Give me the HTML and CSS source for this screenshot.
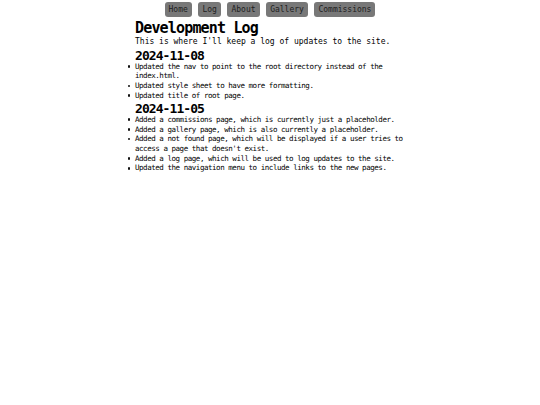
FILE: index.html
```
<!DOCTYPE html>
<html>
<head>
<meta charset="utf-8">
<title>Development Log</title>
<link rel="stylesheet" href="styles.css">
</head>
<body>
<nav class="nav">
  <a class="nav-btn" href="#">Home</a>
  <a class="nav-btn" href="#">Log</a>
  <a class="nav-btn" href="#">About</a>
  <a class="nav-btn" href="#">Gallery</a>
  <a class="nav-btn" href="#">Commissions</a>
</nav>
<main class="main">
  <h1 class="title">Development Log</h1>
  <p class="intro">This is where I'll keep a log of updates to the site.</p>
  <h2 class="date">2024-11-08</h2>
  <ul class="log">
    <li class="log-item">Updated the nav to point to the root directory instead of the index.html.</li>
    <li class="log-item">Updated style sheet to have more formatting.</li>
    <li class="log-item">Updated title of root page.</li>
  </ul>
  <h2 class="date">2024-11-05</h2>
  <ul class="log">
    <li class="log-item">Added a commissions page, which is currently just a placeholder.</li>
    <li class="log-item">Added a gallery page, which is also currently a placeholder.</li>
    <li class="log-item">Added a not found page, which will be displayed if a user tries to access a page that doesn't exist.</li>
    <li class="log-item">Added a log page, which will be used to log updates to the site.</li>
    <li class="log-item">Updated the navigation menu to include links to the new pages.</li>
  </ul>
</main>
</body>
</html>
```
FILE: styles.css
```
html, body {
  margin: 0;
  padding: 0;
  background: #fff;
}
body {
  font-family: "DejaVu Sans Mono", "Liberation Mono", monospace;
  color: #000;
}
.nav {
  display: flex;
  justify-content: center;
  gap: 6.6px;
  padding-top: 2px;
}
.nav-btn {
  display: block;
  font-size: 8px;
  line-height: 15px;
  padding: 0 4px;
  background: #787878;
  color: #1e1e1e;
  border-radius: 3px;
  text-decoration: none;
}
.main {
  width: 270px;
  margin: 0 auto;
}
.title {
  margin: 3px 0 0;
  font-size: 15px;
  letter-spacing: -0.83px;
  line-height: 17px;
  font-weight: bold;
}
.intro {
  margin: 0;
  font-size: 8px;
  line-height: 10px;
}
.date {
  margin: 1.5px 0 0;
  font-size: 13px;
  letter-spacing: -0.93px;
  line-height: 13px;
  font-weight: bold;
}
.log {
  margin: 0;
  padding: 0;
  list-style: none;
  font-size: 7.5px;
  letter-spacing: -0.46px;
  line-height: 9.7px;
}
.log-item {
  position: relative;
}
.log-item::before {
  content: "";
  position: absolute;
  left: -7.5px;
  top: 3.6px;
  width: 2.6px;
  height: 2.6px;
  border-radius: 50%;
  background: #111;
}
```
